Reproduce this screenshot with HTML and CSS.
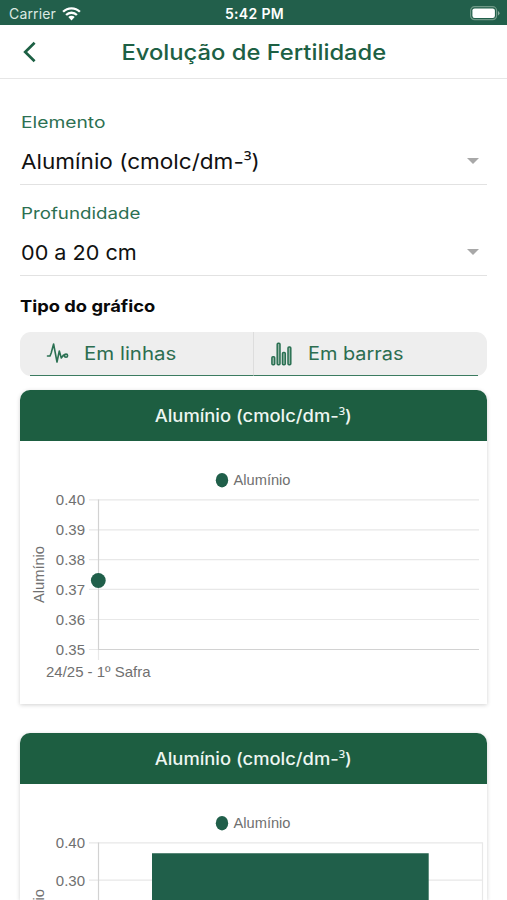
FILE: index.html
```html
<!DOCTYPE html>
<html lang="pt-BR">
<head>
<meta charset="utf-8">
<meta name="viewport" content="width=device-width, initial-scale=1">
<title>Evolução de Fertilidade</title>
<link rel="stylesheet" href="styles.css">
</head>
<body>
<div class="status">
  <div class="carrier"><span>Carrier</span>
    <svg width="19" height="14" viewBox="0 0 19 14" fill="none" stroke="#fff" stroke-width="2.3"><path d="M1.1 4.8a11.8 11.8 0 0 1 16.8 0M4.1 8a7.6 7.6 0 0 1 10.8 0"/><path d="M6.3 10.1a4.5 4.5 0 0 1 6.4 0L9.5 13.5z" fill="#fff" stroke="none"/></svg>
  </div>
  <div class="clock">5:42 PM</div>
  <svg class="battery" width="30" height="15" viewBox="0 0 30 15"><rect x=".6" y=".7" width="26" height="13" rx="4" fill="none" stroke="#6f9987" stroke-width="1.2"/><rect x="2.4" y="2.4" width="22.5" height="9.6" rx="2.2" fill="#fff"/><path d="M28 5v4.5q1.5-.6 1.5-2.2T28 5z" fill="#8bad9e"/></svg>
</div>
<header class="bar">
  <svg class="back" width="14" height="22" viewBox="0 0 14 22" fill="none" stroke="#1d6044" stroke-width="2.7"><path d="M12.6 1.8L3.2 11l9.4 9.2"/></svg>
  <h1><span class="t-title">Evolução de Fertilidade</span></h1>
</header>
<main>
  <section class="field">
    <div class="label"><span class="t-elemento">Elemento</span></div>
    <div class="value"><span class="t-aluminio">Alumínio (cmolc/dm-<b class="exp">³</b>)</span><i class="caret"></i></div>
  </section>
  <section class="field">
    <div class="label"><span class="t-prof">Profundidade</span></div>
    <div class="value"><span class="t-depth">00 a 20 cm</span><i class="caret"></i></div>
  </section>
  <h2><span class="t-tipo">Tipo do gráfico</span></h2>
  <div class="tabs">
    <div class="tab">
      <svg width="24" height="24" viewBox="0 0 24 24" fill="none" stroke="#2a7052" stroke-width="1.6" stroke-linejoin="round" stroke-linecap="round"><path d="M1.5 14H4l1.2-3L7.6 2l3.4 18 2.3-11 2 7 2.2-3 1.1 1.1"/><circle cx="20" cy="13.7" r="1.6"/></svg>
      <span class="t-linhas">Em linhas</span>
    </div>
    <div class="tab">
      <svg width="24" height="26" viewBox="0 0 24 26" fill="#94b6a6" stroke="#2a7052" stroke-width="1.5"><rect x="1.9" y="15.7" width="2.8" height="8" rx="1"/><rect x="7.2" y="2.2" width="2.8" height="21.5" rx="1"/><rect x="12.5" y="11.5" width="2.8" height="12.2" rx="1"/><rect x="18" y="6" width="2.8" height="17.7" rx="1"/></svg>
      <span class="t-barras">Em barras</span>
    </div>
  </div>
  <article class="card">
    <div class="card-head"><span class="t-card">Alumínio (cmolc/dm-<b class="exp">³</b>)</span></div>
    <svg class="chart" width="467" height="263" viewBox="20 441 467 263">
      <ellipse cx="222" cy="480.2" rx="6.2" ry="7.2" class="ink"/>
      <text x="233.5" y="485" textLength="57" lengthAdjust="spacingAndGlyphs">Alumínio</text>
      <path class="grid" d="M89 499.8H479M89 529.8H479M89 559.6H479M89 589.4H479M89 619.5H479M89 649.5H98M98.5 650V660"/>
      <path class="axis" d="M98.5 499.5V649.5H479"/>
      <g text-anchor="end"><text x="85" y="505">0.40</text><text x="85" y="535">0.39</text><text x="85" y="565">0.38</text><text x="85" y="594.8">0.37</text><text x="85" y="625">0.36</text><text x="85" y="654.8">0.35</text></g>
      <circle cx="98.3" cy="580.5" r="7.4" class="ink"/>
      <text transform="translate(44.3 603) rotate(-90)" textLength="57" lengthAdjust="spacingAndGlyphs">Alumínio</text>
      <text x="46" y="677" textLength="104.5" lengthAdjust="spacingAndGlyphs">24/25 - 1º Safra</text>
    </svg>
  </article>
  <article class="card card-last">
    <div class="card-head"><span class="t-card">Alumínio (cmolc/dm-<b class="exp">³</b>)</span></div>
    <svg class="chart" width="467" height="116" viewBox="20 441 467 116">
      <ellipse cx="222" cy="480.2" rx="6.2" ry="7.2" class="ink"/>
      <text x="233.5" y="485" textLength="57" lengthAdjust="spacingAndGlyphs">Alumínio</text>
      <path class="grid" d="M89 499.8H482.5V649.5M89 537.2H482"/>
      <path class="axis" d="M98.5 499.5V649.5"/>
      <path class="ink" d="M152 510.2H428.7V649H152z"/>
      <g text-anchor="end"><text x="85" y="505">0.40</text><text x="85" y="542.5">0.30</text></g>
      <text transform="translate(44.3 603) rotate(-90)" textLength="57" lengthAdjust="spacingAndGlyphs">Alumínio</text>
    </svg>
  </article>
</main>
</body>
</html>
```
FILE: styles.css
```css
* { box-sizing: border-box; }
html, body { height: 900px; overflow: hidden; }
body { margin: 0; background: #fff; color: #111; font-family: Inter, "Open Sans", sans-serif; }
svg { display: block; flex: none; }
span { display: inline-block; white-space: nowrap; transform-origin: left center; }

.status { height: 25px; padding: 2px 7px 0 9px; background: #225f4b; color: #fff; display: grid; grid-template-columns: 1fr auto 1fr; align-items: center; font-size: 14px; }
.carrier { display: flex; align-items: center; gap: 6px; color: #dce9e2; letter-spacing: .15px; }
.clock { font-size: 14px; font-weight: 600; letter-spacing: .35px; }
.battery { justify-self: end; }

.bar { height: 54px; border-bottom: 1px solid #e6e6e6; display: grid; grid-template-columns: 24px 1fr 24px; align-items: center; padding: 1px 22px 0 22px; }
.bar h1 { margin: 0; text-align: center; font-size: 21.5px; line-height: 28px; font-weight: 550; color: #1d6044; }

/* Widened letterforms */
.t-title { transform: scaleX(1.105); transform-origin: center; }
.t-elemento { transform: scaleX(1.18); }
.t-aluminio { transform: scaleX(1.1); }
.t-prof { transform: scaleX(1.15); }
.t-depth { transform: scaleX(1.055); }
.t-tipo { transform: scaleX(1.11); }
.t-linhas { transform: scaleX(1.136); }
.t-barras { transform: scaleX(1.105); }
.t-card { transform: scaleX(1.08); transform-origin: center; }
.exp { font-family: "Open Sans", sans-serif; font-weight: inherit; line-height: 1; }

main { height: 821px; overflow: hidden; padding: 30px 20px 0; }
.field { height: 91px; }
.label { height: 26px; line-height: 26px; padding-left: .7px; font-size: 16.3px; color: #2c7052; }
.value { height: 50px; border-bottom: 1px solid #e2e2e2; display: flex; align-items: center; justify-content: space-between; padding: 3px 8px 0 .7px; font-size: 20.5px; }
.caret { border: 6.5px solid transparent; border-top-color: #a8a8a8; border-bottom: 0; }
h2 { margin: 0; height: 41px; line-height: 30px; font-size: 16.5px; font-weight: 700; color: #0a0a0a; }

.tabs { height: 44px; padding: 0 9.5px; background: #eee; border-radius: 11px; display: flex; }
.tab { flex: 1; display: flex; align-items: center; gap: 14px; padding-left: 16px; border-bottom: 1.5px solid #3b7b60; color: #2c6d50; font-size: 18px; }
.tab + .tab { border-left: 1px solid #ddd; }

.card { height: 314px; margin: 14px 0 29px; border-radius: 10px 10px 0 0; box-shadow: 0 1px 4px rgba(0, 0, 0, .18); background: #fff; overflow: hidden; }
.card-last { height: 167px; margin-bottom: 0; }
.card-head { height: 51px; line-height: 53px; background: #1d5e41; color: #eef6f1; text-align: center; font-size: 17px; font-weight: 500; }
.chart { font: 15px "Liberation Sans", Arial, sans-serif; fill: #707070; }
.grid { fill: none; stroke: #e8e8e8; stroke-width: 1.2; }
.axis { fill: none; stroke: #d2d2d2; stroke-width: 1.2; }
.ink { fill: #205f4a; }
```
